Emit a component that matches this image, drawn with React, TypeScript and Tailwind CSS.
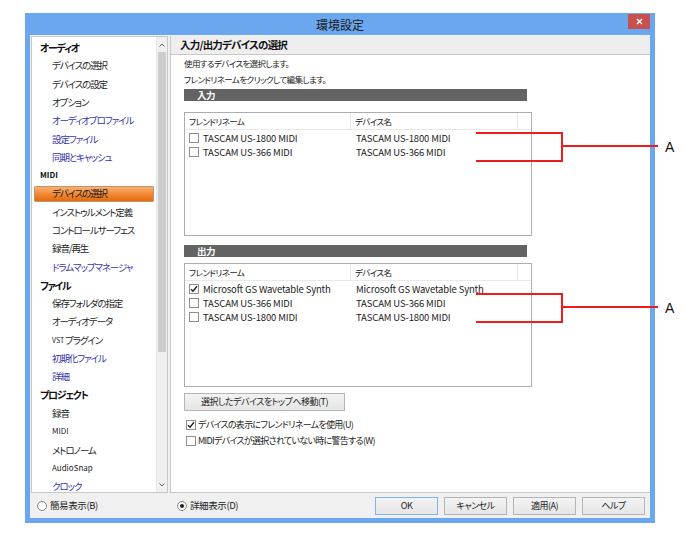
import React from "react";

type Item = { t: string; h?: boolean; b?: boolean; sel?: boolean; small?: boolean; pre?: string };

const tree: Item[] = [
  { t: "オーディオ", h: true },
  { t: "デバイスの選択" },
  { t: "デバイスの設定" },
  { t: "オプション" },
  { t: "オーディオプロファイル", b: true },
  { t: "設定ファイル", b: true },
  { t: "同期とキャッシュ", b: true },
  { t: "MIDI", h: true, small: true },
  { t: "デバイスの選択", sel: true },
  { t: "インストゥルメント定義" },
  { t: "コントロールサーフェス" },
  { t: "録音/再生" },
  { t: "ドラムマップマネージャ", b: true },
  { t: "ファイル", h: true },
  { t: "保存フォルダの指定" },
  { t: "オーディオデータ" },
  { t: "プラグイン", pre: "VST" },
  { t: "初期化ファイル", b: true },
  { t: "詳細", b: true },
  { t: "プロジェクト", h: true },
  { t: "録音" },
  { t: "MIDI", small: true },
  { t: "メトロノーム" },
  { t: "AudioSnap", small: true },
  { t: "クロック", b: true },
];

function Check({ on }: { on?: boolean }) {
  return (
    <span className="w-[10px] h-[10px] border border-[#8e8f8f] bg-white flex items-center justify-center shrink-0">
      {on && (
        <svg width="8" height="8" viewBox="0 0 8 8">
          <path d="M1 4.2 L3 6.3 L7 1.2" stroke="#222" strokeWidth="1.4" fill="none" />
        </svg>
      )}
    </span>
  );
}

function Radio({ on }: { on?: boolean }) {
  return (
    <span className="w-[10px] h-[10px] rounded-full border border-[#8a8a8a] bg-white flex items-center justify-center shrink-0">
      {on && <span className="w-[4px] h-[4px] rounded-full bg-[#222]" />}
    </span>
  );
}

function DeviceList({ rows }: { rows: { name: string; on?: boolean }[] }) {
  return (
    <div className="w-[348px] h-[124px] border border-[#adadad] bg-white flex flex-col">
      <div className="flex h-[17px] border-b border-[#e8e8e8] text-[8.5px] tracking-[-0.6px] text-[#222] items-center">
        <div className="w-[166px] h-full flex items-center pl-[4px] border-r border-[#e8e8e8]">フレンドリネーム</div>
        <div className="w-[167px] h-full flex items-center pl-[4px] border-r border-[#e8e8e8]">デバイス名</div>
        <div className="flex-1" />
      </div>
      <div className="flex flex-col pt-[1px]">
        {rows.map((r, i) => (
          <div key={i} className="flex h-[14px] items-center text-[9.5px] tracking-[-0.15px] text-[#222]">
            <div className="w-[166px] flex items-center pl-[4px] gap-[4px]">
              <Check on={r.on} />
              <span>{r.name}</span>
            </div>
            <div className="pl-[5px]">{r.name}</div>
          </div>
        ))}
      </div>
    </div>
  );
}

function Btn({ children, def, w }: { children: React.ReactNode; def?: boolean; w: string }) {
  return (
    <div
      className={
        "h-[18px] flex items-center justify-center text-[9px] tracking-[-0.5px] text-[#222] bg-gradient-to-b from-[#f3f3f3] to-[#e6e6e6] border " +
        (def ? "border-[#7eb4ea] " : "border-[#b5b5b5] ") +
        w
      }
    >
      {children}
    </div>
  );
}

export default function App() {
  return (
    <div className="w-[695px] h-[533px] bg-white relative font-['Meiryo_UI','Noto_Sans_CJK_JP',sans-serif] [font-feature-settings:'palt'] overflow-hidden">
      <div className="pt-[13px] pl-[25px]">
        <div className="w-[630px] h-[510px] bg-[#6ba7ee] flex flex-col px-[5px] pb-[5px]">
          {/* title bar */}
          <div className="h-[22px] relative flex items-center justify-center shrink-0">
            <span className="text-[12px] text-[#1a1a1a] leading-none mt-[1px]">環境設定</span>
            <div className="absolute right-[0px] top-[1px] w-[22px] h-[15px] bg-[#c75050] flex items-center justify-center">
              <svg width="7" height="7" viewBox="0 0 7 7">
                <path d="M1 1 L6 6 M6 1 L1 6" stroke="white" strokeWidth="1.4" />
              </svg>
            </div>
          </div>
          {/* client */}
          <div className="flex-1 bg-[#f0f0f0] flex flex-col">
            <div className="flex flex-1 pt-[1px] min-h-0">
              {/* tree */}
              <div className="ml-[1px] w-[137px] h-[457px] bg-white border border-[#c8c8c8] flex overflow-hidden">
                <div className="flex-1 flex flex-col pt-[1px] overflow-hidden">
                  {tree.map((it, i) => {
                    const color = it.b ? "text-[#3434ac]" : "text-[#1e1e1e]";
                    if (it.h) {
                      return (
                        <div key={i} className="h-[18.3px] shrink-0 flex items-center pl-[8px]">
                          <span className={"font-bold text-[#111] " + (it.small ? "text-[8px]" : "text-[10px] tracking-[-1.3px]")}>{it.t}</span>
                        </div>
                      );
                    }
                    if (it.sel) {
                      return (
                        <div key={i} className="h-[18.3px] shrink-0 flex items-center px-[2px]">
                          <div className="w-full h-[16px] flex items-center pl-[17px] bg-gradient-to-b from-[#f7b072] via-[#f08a34] to-[#e4690c] border border-[#c89464] rounded-[1px]">
                            <span className="text-[9.5px] tracking-[-1.1px] text-[#1a1a1a]">{it.t}</span>
                          </div>
                        </div>
                      );
                    }
                    return (
                      <div key={i} className="h-[18.3px] shrink-0 flex items-center pl-[20px]">
                        {it.pre && <span className="text-[7px] text-[#1e1e1e] mr-[1px]">{it.pre}</span>}
                        <span className={color + " " + (it.small ? "text-[8px]" : "text-[9.5px] tracking-[-1.1px]")}>{it.t}</span>
                      </div>
                    );
                  })}
                </div>
                {/* scrollbar */}
                <div className="w-[11px] bg-[#f0f0f0] border-l border-[#e6e6e6] flex flex-col">
                  <div className="h-[15px] flex items-center justify-center">
                    <svg width="6" height="4" viewBox="0 0 6 4">
                      <path d="M0.5 3.5 L3 1 L5.5 3.5" stroke="#606060" strokeWidth="1" fill="none" />
                    </svg>
                  </div>
                  <div className="h-[300px] mx-[1px] bg-[#cdcdcd]" />
                  <div className="flex-1" />
                  <div className="h-[15px] flex items-center justify-center">
                    <svg width="6" height="4" viewBox="0 0 6 4">
                      <path d="M0.5 0.5 L3 3 L5.5 0.5" stroke="#606060" strokeWidth="1" fill="none" />
                    </svg>
                  </div>
                </div>
              </div>
              {/* right panel */}
              <div className="ml-[2px] flex-1 h-[457px] bg-white border-l border-b border-[#c8c8c8] flex flex-col">
                <div className="h-[19px] bg-[#eeeeee] border-b border-[#c9c9c9] flex items-center pl-[9px]">
                  <span className="font-bold text-[10.5px] tracking-[-0.8px] text-[#111]">入力/出力デバイスの選択</span>
                </div>
                <div className="pl-[13px] flex flex-col">
                  <div className="h-[16px] flex items-center text-[8.5px] tracking-[-0.6px] text-[#222]">使用するデバイスを選択します。</div>
                  <div className="h-[16px] flex items-center text-[8.5px] tracking-[-0.6px] text-[#222]">フレンドリネームをクリックして編集します。</div>
                  <div className="mt-[2px] w-[343px] h-[12px] bg-[#636363] flex items-center pl-[13px]">
                    <span className="text-white font-bold text-[9.5px] tracking-[-0.5px]">入力</span>
                  </div>
                  <div className="mt-[11px]">
                    <DeviceList rows={[{ name: "TASCAM US-1800 MIDI" }, { name: "TASCAM US-366 MIDI" }]} />
                  </div>
                  <div className="mt-[9px] w-[343px] h-[12px] bg-[#636363] flex items-center pl-[13px]">
                    <span className="text-white font-bold text-[9.5px] tracking-[-0.5px]">出力</span>
                  </div>
                  <div className="mt-[6px]">
                    <DeviceList
                      rows={[
                        { name: "Microsoft GS Wavetable Synth", on: true },
                        { name: "TASCAM US-366 MIDI" },
                        { name: "TASCAM US-1800 MIDI" },
                      ]}
                    />
                  </div>
                  <div className="mt-[6px]">
                    <Btn w="w-[161px]">選択したデバイスをトップへ移動(T)</Btn>
                  </div>
                  <div className="mt-[6px] ml-[2px] h-[16px] flex items-center gap-[2px] text-[9px] tracking-[-0.7px] text-[#222]">
                    <Check on />
                    <span>デバイスの表示にフレンドリネームを使用(U)</span>
                  </div>
                  <div className="ml-[2px] h-[16px] flex items-center gap-[2px] text-[9px] tracking-[-0.7px] text-[#222]">
                    <Check />
                    <span>MIDIデバイスが選択されていない時に警告する(W)</span>
                  </div>
                </div>
              </div>
            </div>
            {/* bottom bar */}
            <div className="h-[25px] shrink-0 flex items-center">
              <div className="w-[140px] flex items-center pl-[7px] gap-[3px] text-[9.5px] tracking-[-0.4px] text-[#222]">
                <Radio />
                <span>簡易表示(B)</span>
              </div>
              <div className="flex items-center pl-[7px] gap-[3px] text-[9.5px] tracking-[-0.4px] text-[#222]">
                <Radio on />
                <span>詳細表示(D)</span>
              </div>
              <div className="ml-auto mr-[5px] flex gap-[6px]">
                <Btn def w="w-[63px]">OK</Btn>
                <Btn w="w-[63px]">キャンセル</Btn>
                <Btn w="w-[63px]">適用(A)</Btn>
                <Btn w="w-[63px]">ヘルプ</Btn>
              </div>
            </div>
          </div>
        </div>
      </div>

      {/* annotation overlay */}
      <svg className="absolute left-0 top-0 pointer-events-none" width="695" height="533">
        <g stroke="#ee1c1c" strokeWidth="2" fill="none">
          <path d="M476 133 H562 V161 H476" />
          <path d="M562 146 H658" />
          <path d="M476 294 H562 V322 H476" />
          <path d="M562 307 H658" />
        </g>
      </svg>
      <span className="absolute left-[665px] top-[138px] text-[14px] leading-[18px] font-['Liberation_Sans',sans-serif] text-[#111]">A</span>
      <span className="absolute left-[665px] top-[299px] text-[14px] leading-[18px] font-['Liberation_Sans',sans-serif] text-[#111]">A</span>
    </div>
  );
}
